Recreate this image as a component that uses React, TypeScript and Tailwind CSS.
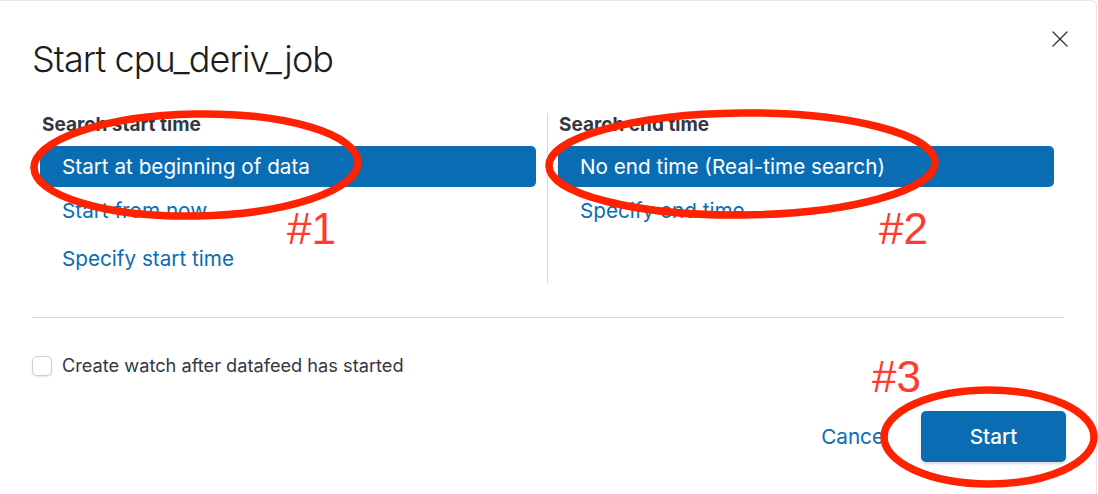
import { X } from 'lucide-react'

function Annotations(): JSX.Element {
  return (
    <svg className="pointer-events-none absolute inset-0" width="1098" height="494" viewBox="0 0 1098 494">
      <g fill="none" stroke="#ff2200" strokeWidth="7.5">
        <ellipse cx="196" cy="165" rx="162" ry="51" transform="rotate(-1 196 165)" />
        <ellipse cx="742" cy="164" rx="193" ry="51" transform="rotate(-0.5 742 164)" />
        <ellipse cx="989" cy="437" rx="105" ry="47" />
      </g>
    </svg>
  )
}

function Option({ label, selected }: { label: string; selected?: boolean }): JSX.Element {
  return selected ? (
    <div className="flex h-[41px] items-center rounded-[5px] bg-[#0a6db4] pl-[22px] text-[20.7px] text-white">
      {label}
    </div>
  ) : (
    <div className="flex h-[48px] items-center pl-[22px] text-[20.7px] text-[#0a6db4]">{label}</div>
  )
}

export default function App(): JSX.Element {
  return (
    <div className="relative h-[494px] w-[1098px] overflow-hidden bg-white font-['Inter',sans-serif]">
      <div className="h-[494px] w-[1097px] rounded-tr-[6px] border-t border-r border-[#e3e6eb] bg-white">
        <div className="flex items-start justify-between pl-[32px] pr-[22px] pt-[34px]">
          <h1 className="text-[36px] font-light leading-[48px] tracking-[-0.9px] text-[#1a1c21]">
            Start cpu_deriv_job
          </h1>
          <X className="mt-[-10px] h-[28px] w-[28px] text-[#343741]" strokeWidth={1.2} />
        </div>

        <div className="mx-[32px] mt-[30px] flex border-b border-[#d3dae6] pb-[34px]">
          <div className="flex-1 pl-[8px] pr-[11px]">
            <div className="pl-[2px] text-[19px] font-bold leading-[24px] text-[#343741]">Search start time</div>
            <div className="mt-[9px]">
              <Option label="Start at beginning of data" selected />
              <Option label="Start from now" />
              <Option label="Specify start time" />
            </div>
          </div>
          <div className="w-px self-stretch bg-[#d3dae6]" />
          <div className="flex-1 pl-[10px] pr-[10px]">
            <div className="pl-[1px] text-[19px] font-bold leading-[24px] text-[#343741]">Search end time</div>
            <div className="mt-[9px]">
              <Option label="No end time (Real-time search)" selected />
              <Option label="Specify end time" />
            </div>
          </div>
        </div>

        <div className="mt-[34px] flex items-center pl-[32px]">
          <div className="h-[20px] w-[20px] rounded-[5px] border border-[#c9cfd8] bg-white shadow-[0_1px_2px_rgba(0,0,0,0.1)]" />
          <span className="ml-[10px] text-[18.2px] text-[#343741]">Create watch after datafeed has started</span>
        </div>

        <div className="mt-[32px] flex items-center justify-end pr-[30px]">
          <span className="mr-[32px] text-[20.7px] text-[#0a6db4]">Cancel</span>
          <div className="flex h-[51px] w-[145px] items-center justify-center rounded-[5px] bg-[#0a6db4] text-[20.7px] font-medium text-white shadow-[0_2px_3px_rgba(0,0,0,0.15)]">
            Start
          </div>
        </div>
      </div>

      <div className="absolute left-[287px] top-[207px] font-['Liberation_Sans',sans-serif] text-[44px] leading-none text-[#ff3b30]">#1</div>
      <div className="absolute left-[879px] top-[207px] font-['Liberation_Sans',sans-serif] text-[44px] leading-none text-[#ff3b30]">#2</div>
      <div className="absolute left-[872px] top-[355px] font-['Liberation_Sans',sans-serif] text-[44px] leading-none text-[#ff3b30]">#3</div>
      <Annotations />
    </div>
  )
}
